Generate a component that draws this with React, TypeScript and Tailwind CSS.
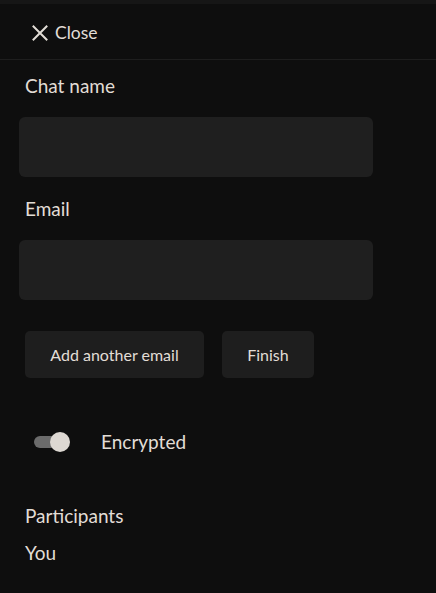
import React from "react";

export default function App() {
  return (
    <div
      className="w-[436px] h-[593px] bg-[#0e0e0e] text-[#e2ddd6] overflow-hidden flex flex-col"
      style={{ fontFamily: "Lato, 'Noto Sans', sans-serif" }}
    >
      <div className="h-[4px] bg-[#161616]" />
      <div className="h-[56px] border-b border-[#1e1e1e] flex items-center pl-[32px] gap-[7px] pt-[2px]">
        <svg width="16" height="16" viewBox="0 0 16 16" fill="none" stroke="#e2ddd6" strokeWidth="2" strokeLinecap="square">
          <path d="M1.5 1.5 L14.5 14.5 M14.5 1.5 L1.5 14.5" />
        </svg>
        <span className="text-[17.5px] leading-[24px]">Close</span>
      </div>
      <div className="flex flex-col">
        <label className="mt-[14px] ml-[25px] text-[19px] leading-[24px]">Chat name</label>
        <div className="mt-[19px] ml-[19px] w-[354px] h-[60px] rounded-[6px] bg-[#1f1f1f]" />
        <label className="mt-[20px] ml-[25px] text-[19px] leading-[24px]">Email</label>
        <div className="mt-[19px] ml-[19px] w-[354px] h-[60px] rounded-[6px] bg-[#1f1f1f]" />
        <div className="mt-[31px] ml-[25px] flex gap-[18px]">
          <button className="h-[47px] w-[179px] rounded-[5px] bg-[#1e1e1e] text-[16px] text-[#e2ddd6]">Add another email</button>
          <button className="h-[47px] w-[92px] rounded-[5px] bg-[#1e1e1e] text-[16px] text-[#e2ddd6]">Finish</button>
        </div>
        <div className="mt-[52px] ml-[34px] flex items-center h-[24px]">
          <div className="relative w-[36px] h-[20px] flex items-center">
            <div className="w-[28px] h-[12px] rounded-full bg-[#6b6b6b]" />
            <div className="absolute left-[16px] top-0 w-[20px] h-[20px] rounded-full bg-[#ddd8d2]" />
          </div>
          <span className="ml-[31px] text-[19px] leading-[24px]">Encrypted</span>
        </div>
        <div className="mt-[50px] ml-[25px] text-[19px] leading-[24px]">Participants</div>
        <div className="mt-[13px] ml-[25px] text-[19px] leading-[24px]">You</div>
      </div>
    </div>
  );
}
